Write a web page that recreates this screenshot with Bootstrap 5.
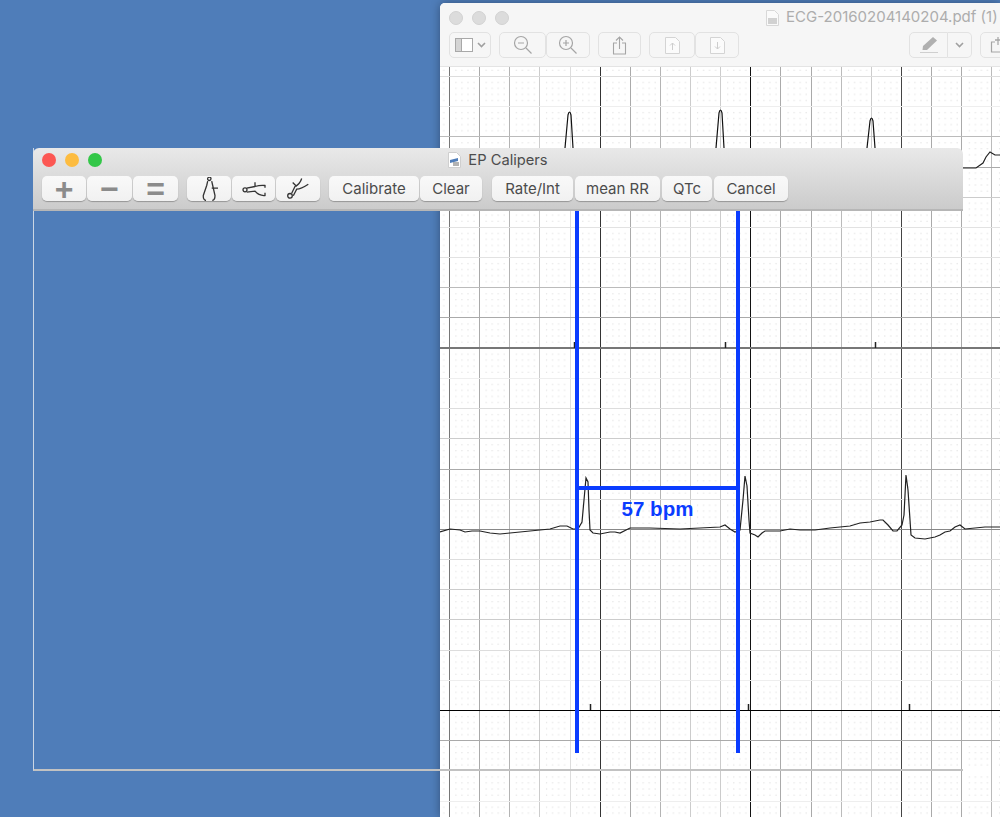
<!DOCTYPE html>
<html lang="en">
  <head>
    <meta charset="UTF-8" />
    <meta name="viewport" content="width=device-width, initial-scale=1" />
    <title>EP Calipers</title>
    <link href="https://cdn.jsdelivr.net/npm/bootstrap@5.3.0/dist/css/bootstrap.min.css" rel="stylesheet" />
    <style>
      body { background: #4f7db9; height: 817px; overflow: hidden; font-family: Inter, "Liberation Sans", sans-serif; }

      /* PDF viewer window, behind */
      .pdf-win { left: 440px; top: 3px; width: 560px; height: 814px; background: #fff; border-radius: 5px 0 0 0; box-shadow: 0 0 10px rgba(0, 0, 0, .35); overflow: hidden; }
      .pdf-bar { height: 64px; background: #f6f6f6; border-bottom: 1px solid #e4e4e4; }
      .pdf-top { height: 29px; padding-left: 9px; }
      .pdf-lights { gap: 9px; }
      .pdf-light { width: 14px; height: 14px; border-radius: 50%; background: #dcdcdc; border: 1px solid #d2d2d2; }
      .pdf-title { margin-left: 257px; font-size: 15px; color: #adadad; white-space: nowrap; gap: 7px; }
      .pdf-tools { padding-left: 9px; height: 26px; }
      .pdf-btn { height: 26px; flex: none; border: 1px solid #e2e2e2; border-radius: 5px; background: #f6f6f6; }
      .w-42 { width: 42px; } .w-47 { width: 47px; } .w-44 { width: 44px; } .w-43 { width: 43px; } .w-46 { width: 46px; } .w-40 { width: 39px; } .w-23 { width: 24px; } .w-60 { width: 60px; }
      .pen-gap { margin-left: 170px; }
      .pen-left { border-radius: 5px 0 0 5px; }
      .pen-right { border-radius: 0 5px 5px 0; border-left: 0; }
      .pdf-page { display: block; }

      /* calipers window, on top */
      .cal-win { left: 33px; top: 148px; width: 930px; height: 623px; border-left: 1px solid #cbd6e4; border-bottom: 2px solid #c2c2c2; }
      .cal-bar { height: 63px; margin-left: -1px; background: linear-gradient(#e9e9e9, #cbcbcb); border-bottom: 2px solid #b6b6b6; border-radius: 6px 6px 0 0; padding: 0 9px; }
      .cal-top { height: 23px; margin-bottom: 5px; display: grid; grid-template-columns: 1fr auto 1fr; align-items: center; }
      .cal-lights { gap: 9px; }
      .cal-light { width: 14px; height: 14px; border-radius: 50%; }
      .luz-roja { background: #fc5753; }
      .luz-ambar { background: #fdbc40; }
      .luz-verde { background: #33c748; }
      .cal-title { font-size: 14.7px; line-height: 18px; color: #4c4c4c; gap: 7px; }
      .cal-tools { gap: 9px; }
      .cal-group { gap: 1px; }
      .cal-group-ancho { gap: 2px; margin-left: 1px; }
      .cal-btn { height: 25px; padding: 0; border: 0; border-radius: 5px; background: linear-gradient(#f9f9f9, #f1f1f1); box-shadow: 0 1px 1px rgba(0, 0, 0, .28); font-size: 15px; line-height: 25px; color: #4c4c4c; }
      .cal-sym { font-family: "Liberation Sans", sans-serif; font-weight: 700; font-size: 32px; line-height: 24px; color: #8b8b8b; }
      .b-44 { width: 44px; } .b-45 { width: 45px; } .b-43 { width: 43px; } .b-90 { width: 90px; } .b-62 { width: 62px; } .b-81 { width: 81px; } .b-85 { width: 85px; } .b-50 { width: 50px; } .b-74 { width: 74px; }

      /* caliper drawn over the ECG */
      .cal-leg { width: 4px; height: 542px; top: 0; background: #0a3cff; }
      .cal-cross { height: 4px; top: 275px; left: 541px; width: 165px; background: #0a3cff; }
      .cal-value { top: 286px; left: 541px; width: 165px; text-align: center; font-family: "Liberation Sans", sans-serif; font-weight: 700; font-size: 20.5px; line-height: 24px; color: #0a3cff; }
      .leg-a { left: 541px; } .leg-b { left: 702px; }
    </style>
  </head>
  <body>
    <!-- ventana del PDF -->
    <div class="pdf-win position-absolute">
      <div class="pdf-bar">
        <div class="pdf-top d-flex align-items-center">
          <span class="pdf-lights d-flex">
            <span class="pdf-light"></span>
            <span class="pdf-light"></span>
            <span class="pdf-light"></span>
          </span>
          <span class="pdf-title d-flex align-items-center">
            <svg width="13" height="16" viewBox="0 0 13 16"><path d="M.5.5h8l4 4v11H.5z" fill="#fafafa" stroke="#d8d8d8"/><path d="M2 9h9M2 11h9M2 13h9" stroke="#a9a9a9"/></svg>
            ECG-20160204140204.pdf (1)
          </span>
        </div>
        <div class="pdf-tools d-flex">
          <div class="pdf-btn w-42 d-flex align-items-center justify-content-center gap-1 me-2">
            <svg width="18" height="14" viewBox="0 0 18 14"><rect x=".5" y=".5" width="17" height="13" fill="#fff" stroke="#a8a8a8"/><rect x="1" y="1" width="5" height="12" fill="#d4d4d4"/><path d="M6.5 1v12" stroke="#a8a8a8"/></svg>
            <svg width="9" height="6" viewBox="0 0 9 6"><path d="M1 1l3.5 3.5L8 1" fill="none" stroke="#a0a0a0" stroke-width="1.6"/></svg>
          </div>
          <div class="d-flex me-2">
            <div class="pdf-btn w-47 d-flex align-items-center justify-content-center">
              <svg width="20" height="20" viewBox="0 0 20 20"><circle cx="8" cy="8" r="6.5" fill="none" stroke="#a5a5a5" stroke-width="1.2"/><path d="M5 8h6M13 13l5.500 5.500" stroke="#a5a5a5" stroke-width="1.2"/></svg>
            </div>
            <div class="pdf-btn w-44 d-flex align-items-center justify-content-center">
              <svg width="20" height="20" viewBox="0 0 20 20"><circle cx="8" cy="8" r="6.5" fill="none" stroke="#a5a5a5" stroke-width="1.2"/><path d="M5 8h6M8 5v6M13 13l5.500 5.500" stroke="#a5a5a5" stroke-width="1.2"/></svg>
            </div>
          </div>
          <div class="pdf-btn w-43 d-flex align-items-center justify-content-center me-2">
            <svg width="15" height="19" viewBox="0 0 15 19"><path d="M5 7H1.500v11h12V7H10M7.500 13V1M4 4.500L7.500 1 11 4.500" fill="none" stroke="#a5a5a5" stroke-width="1.1"/></svg>
          </div>
          <div class="d-flex">
            <div class="pdf-btn w-46 d-flex align-items-center justify-content-center">
              <svg width="15" height="17" viewBox="0 0 15 17"><path d="M.5.500h10l4 4v12H.5z" fill="#fbfbfb" stroke="#d4d4d4"/><path d="M7.500 13V6M5 8.500L7.500 6 10 8.500" fill="none" stroke="#cdcdcd"/></svg>
            </div>
            <div class="pdf-btn w-44 d-flex align-items-center justify-content-center">
              <svg width="15" height="17" viewBox="0 0 15 17"><path d="M.5.500h10l4 4v12H.5z" fill="#fbfbfb" stroke="#d4d4d4"/><path d="M7.500 5v7M5 9.500L7.500 12 10 9.500" fill="none" stroke="#cdcdcd"/></svg>
            </div>
          </div>
          <div class="d-flex pen-gap me-2">
            <div class="pdf-btn pen-left w-40 d-flex align-items-center justify-content-center">
              <svg width="20" height="18" viewBox="0 0 20 18"><path d="M14 1l4 3.500L8 14H3.500L4 10z" fill="#b0b0b0"/><path d="M1 16.500h18" stroke="#cfcfcf"/></svg>
            </div>
            <div class="pdf-btn pen-right w-23 d-flex align-items-center justify-content-center">
              <svg width="9" height="6" viewBox="0 0 9 6"><path d="M1 1l3.500 3.500L8 1" fill="none" stroke="#a0a0a0" stroke-width="1.6"/></svg>
            </div>
          </div>
          <div class="pdf-btn w-60 ps-2 d-flex align-items-center">
            <svg width="20" height="18" viewBox="0 0 20 18"><path d="M6 6H2.500v10h14V6H13M9 9V1" fill="none" stroke="#a5a5a5" stroke-width="1.2"/><path d="M6 4h6" stroke="#a5a5a5" stroke-width="1.500"/></svg>
          </div>
        </div>
      </div>
      <svg class="pdf-page" width="560" height="750" viewBox="440 67 560 750">
        <defs>
          <pattern id="puntos" x="449.5" y="75.9" width="30.2" height="30.2" patternUnits="userSpaceOnUse">
            <path d="M6 6.500h1M12 6.500h1M18 6.500h1M24 6.500h1M6 12.500h1M12 12.500h1M18 12.500h1M24 12.500h1M6 18.500h1M12 18.500h1M18 18.500h1M24 18.500h1M6 24.500h1M12 24.500h1M18 24.500h1M24 24.500h1" stroke="#d4d4d4"/>
          </pattern>
        </defs>
        <rect x="440" y="67" width="560" height="750" fill="url(#puntos)"/>
        <g id="rejilla" shape-rendering="crispEdges"></g>
        <!-- marcas de calibracion -->
        <path d="M574.500 342v6M725.500 342v6M875.500 342v6M590.500 704v6M748.500 704v6M909.500 704v6" stroke="#222" stroke-width="1.500"/>
        <!-- trazado superior -->
        <path d="M565 148l3-33q1.500-6 3 0l2 33M716 148l3-35q1.500-6 3 0l2 35M867 148l3-27q1.500-6 3 0l2 27" fill="none" stroke="#111" stroke-width="1.200"/>
        <path d="M962 168h14l7-5 3-6 4-5 5 3h5" fill="none" stroke="#222" stroke-width="1.200"/>
        <!-- trazado central -->
        <polyline fill="none" stroke="#222" stroke-width="1.200" points="440,532 450,529 460,530 465,532 472,531 480,531 490,533 500,534 510,533 530,531 550,529 560,526 567,526 573,529 578,529 582,522 584,500 586,478 588,482 589,510 590,530 593,533 600,534 610,532 615,532 620,533 630,528 650,528 680,529 700,528 720,527 725,525 730,529 735,532 740,530 743,500 745,476 747,486 749,520 750,533 755,535 758,537 762,533 765,531 780,531 790,529 800,530 815,530 830,528 850,526 860,523 870,522 880,520 883,520 888,525 893,531 897,531 902,525 904,515 906,475 908,490 910,520 911,535 915,538 925,539 935,537 940,535 945,532 950,531 955,527 960,525 965,529 975,528 985,527 995,527 1000,527"/>
      </svg>
    </div>

    <!-- ventana de EP Calipers -->
    <div class="cal-win position-absolute">
      <div class="cal-bar">
        <div class="cal-top">
          <div class="cal-lights d-flex">
            <span class="cal-light luz-roja"></span>
            <span class="cal-light luz-ambar"></span>
            <span class="cal-light luz-verde"></span>
          </div>
          <div class="cal-title d-flex align-items-center">
            <svg width="13" height="16" viewBox="0 0 13 16"><path d="M.5.500h8l4 4v11H.5z" fill="#fff" stroke="#cfcfcf"/><path d="M2 8l8-2v3l-8 2z" fill="#4f7db9"/><path d="M5 11h6M5 13h6" stroke="#666"/></svg>
            EP Calipers
          </div>
          <div></div>
        </div>
        <div class="cal-tools d-flex">
          <div class="cal-group d-flex">
            <button class="btn cal-btn cal-sym b-44">+</button>
            <button class="btn cal-btn cal-sym b-45">−</button>
            <button class="btn cal-btn cal-sym b-45">=</button>
          </div>
          <div class="cal-group d-flex">
            <button class="btn cal-btn b-44 d-flex align-items-center justify-content-center">
              <svg width="18" height="24" viewBox="0 0 18 24" fill="none" stroke="#333" stroke-width="1.300"><circle cx="9.300" cy="1.800" r="1.700"/><path d="M7.700 4.200L6.700 8.500 3.300 18.500Q3 23 6 23.500M11.700 4.200L12.700 8.500 15 18.500Q15 23 12.300 23.500M11.700 11.200H18"/></svg>
            </button>
            <button class="btn cal-btn b-43 d-flex align-items-center justify-content-center">
              <svg width="26" height="18" viewBox="0 0 26 18" fill="none" stroke="#333" stroke-width="1.300"><circle cx="4" cy="9.800" r="2"/><path d="M5.700 8.200L14 6.500Q19 5 24 5.500v2.300M5.700 12.200L14 11.200Q18 16 24 15.500v-2.800M14 2.200V6.500"/></svg>
            </button>
            <button class="btn cal-btn b-44 d-flex align-items-center justify-content-center">
              <svg width="22" height="22" viewBox="0 0 22 22" fill="none" stroke="#333" stroke-width="1.300"><circle cx="3" cy="17.800" r="2.300"/><path d="M4.700 15.200L8 8.500Q13 6 14.700 .5M6.300 17.800L9.700 11.200Q14 11 21.300 6.200M5.700 4.500L9.700 8.500"/></svg>
            </button>
          </div>
          <div class="cal-group d-flex">
            <button class="btn cal-btn b-90">Calibrate</button>
            <button class="btn cal-btn b-62">Clear</button>
          </div>
          <div class="cal-group cal-group-ancho d-flex">
            <button class="btn cal-btn b-81">Rate/Int</button>
            <button class="btn cal-btn b-85">mean RR</button>
            <button class="btn cal-btn b-50">QTc</button>
            <button class="btn cal-btn b-74">Cancel</button>
          </div>
        </div>
      </div>
      <div class="position-relative">
        <div class="cal-leg leg-a position-absolute"></div>
        <div class="cal-leg leg-b position-absolute"></div>
        <div class="cal-cross position-absolute"></div>
        <div class="cal-value position-absolute">57 bpm</div>
      </div>
    </div>

    <script src="https://cdn.jsdelivr.net/npm/bootstrap@5.3.0/dist/js/bootstrap.bundle.min.js"></script>
    <script>
      // colores de la rejilla, una entrada por linea
      const verticales = ['#777', '#aaa', '#b4b4b4', '#ccc', '#ddd', '#333', '#aaa', '#b4b4b4', '#ccc', '#ccc', '#111', '#aaa', '#aaa', '#bbb', '#ccc', '#444', '#aaa', '#aaa', '#bbb'];
      const horizontales = [[76, '#ddd'], [106, '#eee'], [136, '#bbb'], [167, '#aaa'], [197, '#ccc'], [227, '#e2e2e2'], [257, '#e2e2e2'], [287, '#bbb'], [317, '#aaa'], [347.5, '#777', 2], [378, '#eee'], [408, '#ddd'], [438, '#ccc'], [469, '#aaa'], [499, '#ddd'], [529, '#888'], [559, '#ddd'], [589, '#ccc'], [619, '#ccc'], [650, '#ddd'], [680, '#eee'], [710, '#000'], [740, '#aaa'], [801, '#eee']];

      const rejilla = document.getElementById('rejilla');
      const NS = 'http://www.w3.org/2000/svg';
      function linea(x1, y1, x2, y2, color, grosor = 1) {
        const l = document.createElementNS(NS, 'line');
        l.setAttribute('x1', x1);
        l.setAttribute('y1', y1);
        l.setAttribute('x2', x2);
        l.setAttribute('y2', y2);
        l.setAttribute('stroke', color);
        l.setAttribute('stroke-width', grosor);
        rejilla.appendChild(l);
      }
      verticales.forEach((c, i) => {
        const x = Math.floor(449.5 + i * 30.13) + 0.5;
        linea(x, 67, x, 817, c);
      });
      horizontales.forEach(([y, c, g]) => linea(440, y + 0.5, 1000, y + 0.5, c, g));
    </script>
  </body>
</html>
